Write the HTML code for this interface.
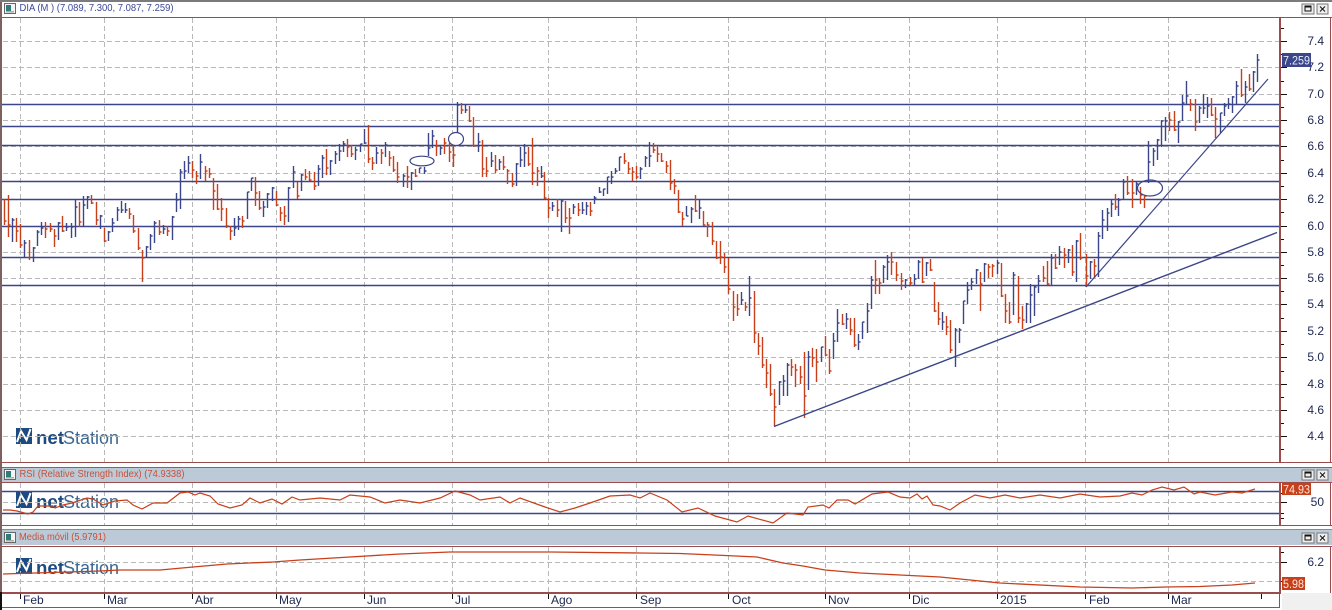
<!DOCTYPE html>
<html><head><meta charset="utf-8"><style>
html,body{margin:0;padding:0;background:#fff;width:1332px;height:610px;overflow:hidden}
svg{display:block;font-family:"Liberation Sans",sans-serif}
</style></head><body>
<svg width="1332" height="610" viewBox="0 0 1332 610" xmlns="http://www.w3.org/2000/svg">
<defs>
<g id="logo">
<rect x="16" y="0" width="16" height="16" fill="#1c4a82"/>
<path d="M17 14 L21 3 L26.5 12 L30.5 1" fill="none" stroke="#fff" stroke-width="2"/>
<text x="36" y="16" font-size="18.5" textLength="28" lengthAdjust="spacingAndGlyphs" font-weight="bold" fill="#1c4a82">net</text>
<text x="63" y="16" font-size="18.5" textLength="56" lengthAdjust="spacingAndGlyphs" fill="#3a6796">Station</text>
</g>
<g id="btns">
<rect x="1302" y="0" width="12" height="10" fill="#eee" stroke="#777" shape-rendering="crispEdges"/>
<rect x="1305" y="2" width="6" height="5" fill="none" stroke="#111" stroke-width="1" shape-rendering="crispEdges"/>
<path d="M1305 2.5h6" stroke="#111" stroke-width="2" shape-rendering="crispEdges"/>
<rect x="1317" y="0" width="11" height="10" fill="#eee" stroke="#777" shape-rendering="crispEdges"/>
<path d="M1320 2.5l5 5M1325 2.5l-5 5" stroke="#111" stroke-width="1"/>
</g>
<g id="ico">
<rect x="4.5" y="0.5" width="11" height="10" fill="#f4f4f4" stroke="#666" shape-rendering="crispEdges"/>
<rect x="6" y="2" width="5" height="6" fill="#2f7d78"/>
<rect x="6" y="8" width="8" height="1.5" fill="#aaa"/>
</g>
</defs>

<!-- window chrome -->
<rect x="0" y="0" width="1332" height="2" fill="#7b7b7b"/>
<use href="#ico" y="3"/>
<text x="19.5" y="11" font-size="10" textLength="154" lengthAdjust="spacingAndGlyphs" fill="#3b4a96">DIA (M ) (7.089, 7.300, 7.087, 7.259)</text>
<use href="#btns" y="4"/>

<rect x="1" y="467" width="1331" height="1.5" fill="#6e6e6e"/>
<rect x="1" y="468" width="1331" height="14" fill="#bccad8"/>
<use href="#ico" y="469"/>
<text x="19.5" y="477" font-size="10" textLength="165" lengthAdjust="spacingAndGlyphs" fill="#c8503a">RSI (Relative Strength Index) (74.9338)</text>
<use href="#btns" y="470"/>

<rect x="1" y="529" width="1331" height="1.5" fill="#8a8a8a"/>
<rect x="1" y="530" width="1331" height="15" fill="#bccad8"/>
<use href="#ico" y="532"/>
<text x="19" y="540" font-size="10" textLength="87" lengthAdjust="spacingAndGlyphs" fill="#c8503a">Media móvil (5.9791)</text>
<use href="#btns" y="533"/>

<rect x="1282" y="593" width="50" height="17" fill="#f0f0f0"/>

<!-- logos -->
<use href="#logo" y="428"/>
<use href="#logo" y="492"/>
<use href="#logo" y="558"/>

<!-- grid -->
<g stroke="#b8b8b8" stroke-width="1" stroke-dasharray="5 3" shape-rendering="crispEdges" fill="none">
<path d="M20.5 18V462M104.5 18V462M192.5 18V462M276.5 18V462M364.5 18V462M452.5 18V462M548.5 18V462M636.5 18V462M728.5 18V462M825.5 18V462M909.5 18V462M997.5 18V462M1085.5 18V462M1168.5 18V462"/>
<path d="M3 41.5H1279M3 67.5H1279M3 94.5H1279M3 120.5H1279M3 146.5H1279M3 173.5H1279M3 199.5H1279M3 226.5H1279M3 252.5H1279M3 278.5H1279M3 304.5H1279M3 331.5H1279M3 357.5H1279M3 384.5H1279M3 410.5H1279M3 436.5H1279"/>
<path d="M20.5 483V525M104.5 483V525M192.5 483V525M276.5 483V525M364.5 483V525M452.5 483V525M548.5 483V525M636.5 483V525M728.5 483V525M825.5 483V525M909.5 483V525M997.5 483V525M1085.5 483V525M1168.5 483V525"/>
<path d="M3 502.5H1279"/>
<path d="M20.5 547V592M104.5 547V592M192.5 547V592M276.5 547V592M364.5 547V592M452.5 547V592M548.5 547V592M636.5 547V592M728.5 547V592M825.5 547V592M909.5 547V592M997.5 547V592M1085.5 547V592M1168.5 547V592"/>
<path d="M3 562.5H1279M3 581.5H1279"/>
</g>

<!-- horizontal levels -->
<g stroke="#3b4589" stroke-width="1.4" fill="none">
<path d="M2 104.5H1279M2 126.5H1279M2 145.5H1279M2 181.5H1279M2 199.5H1279M2 226.5H1279M2 257.5H1279M2 285.5H1279"/>
<path d="M2 491.5H1279M2 513.5H1279"/>
</g>

<!-- bars -->
<g transform="translate(.5 0)" fill="none" stroke-width="1.4">
<path stroke="#c8401a" d="M4 199V225M4 221h2M8 195V237M8 225h2M16 218V242M16 231h2M20 224V248M20 245h2M29 240V260M45 222V238M45 229h2M50 223V232M50 229h2M54 229V247M54 236h2M62 216V232M62 231h2M79 202V227M79 222h2M91 195V204M91 203h2M96 202V225M96 220h2M104 228V242M104 241h2M129 208V219M129 214h2M133 215V233M133 231h2M138 228V250M138 248h2M142 250V282M142 258h2M159 220V235M159 232h2M167 226V236M167 231h2
M192 161V178M192 170h2M196 171V184M196 176h2M205 166V181M205 171h2M209 168V178M209 174h2M213 178V210M213 191h2M217 184V210M217 209h2M221 198V221M221 209h2M226 208V228M226 226h2M230 226V240M230 231h2M242 216V228M242 221h2M255 177V206M255 193h2M259 191V210M259 208h2M276 191V206M276 205h2M280 207V221M280 213h2M284 206V225M284 216h2M297 182V199M297 196h2M305 169V180M305 177h2M309 171V181M309 180h2M314 172V190M314 186h2M326 149V175M326 168h2M347 139V157M347 147h2M351 145V157M351 154h2M368 125V163M368 159h2M372 157V170M372 163h2M381 149V164M381 153h2M389 151V166M389 158h2M393 156V172M393 170h2M397 162V183M397 177h2M407 166V188M407 177h2M415 169V177M415 176h2M436 140V156M436 146h2M444 138V154M444 143h2M449 143V162M449 152h2M453 145V167M453 155h2M461 103V114M461 110h2M469 106V122M469 121h2M473 117V147M473 146h2M482 140V177M482 169h2M486 157V177M486 171h2M495 155V173M495 170h2M503 156V170M503 167h2M507 169V184M507 171h2M512 173V187M512 184h2M528 147V166M528 164h2M532 138V185M532 173h2M537 167V186M537 171h2M544 172V199M544 198h2M548 198V218M548 208h2M557 199V217M557 210h2M565 201V223M565 218h2M569 208V234M569 218h2M578 203V216M578 210h2M590 202V216M590 211h2
M624 153V164M624 161h2M628 162V174M628 169h2M632 167V181M632 172h2M636 166V179M636 177h2M653 143V153M653 150h2M657 146V162M657 154h2M661 153V162M661 161h2M666 161V173M666 166h2M670 160V190M670 183h2M674 179V194M674 186h2M678 190V213M678 212h2M682 212V226M682 219h2M695 195V212M695 211h2M703 211V226M703 225h2M707 222V237M707 225h2M712 222V245M712 241h2M716 241V259M716 258h2M720 241V264M720 257h2M724 253V273M724 267h2M728 258V294M728 289h2M733 291V321M733 307h2M737 294V316M737 309h2M745 302V311M745 307h2M754 291V343M754 333h2M758 333V355M758 346h2M762 337V368M762 365h2M766 359V388M766 373h2M770 364V396M770 394h2M774 389V426M774 407h2M791 359V376M791 367h2M795 364V387M795 370h2M800 366V384M800 377h2M804 352V418M804 396h2M812 348V367M812 358h2M816 349V382M816 362h2M825 336V356M825 355h2M829 349V374M829 371h2M842 314V325M842 324h2M850 318V335M850 330h2M854 318V347M854 345h2M875 260V294M875 280h2M879 278V294M879 283h2M891 252V275M891 262h2M896 262V281M896 275h2M901 273V290M901 281h2M910 277V285M910 283h2M922 258V283M922 282h2M930 259V271M930 270h2M934 282V312M934 311h2M938 302V325M938 319h2M946 316V335M946 327h2M950 320V353M950 350h2M980 272V311M980 284h2M988 264V278M988 267h2M992 264V277M992 266h2M1001 263V297M1001 296h2M1005 294V323M1005 311h2M1009 302V324M1009 322h2M1018 276V323M1018 318h2M1022 306V329M1022 320h2M1043 266V282M1043 278h2M1047 261V285M1047 284h2M1055 254V269M1055 268h2M1064 248V268M1064 255h2M1072 245V276M1072 272h2M1080 233V260M1080 258h2M1086 254V287M1086 276h2M1094 259V278M1094 266h2M1115 194V210M1115 207h2M1127 176V195M1127 193h2M1132 179V208M1132 193h2M1140 187V204M1140 195h2M1144 195V208M1144 196h2M1169 112V131M1169 120h2M1174 111V131M1174 130h2M1190 99V111M1190 104h2M1195 99V131M1195 122h2M1211 98V116M1211 115h2M1215 107V138M1215 119h2M1241 69V97M1241 95h2M1249 74V91M1249 89h2"/>
<path stroke="#3b4589" d="M12 218V242M12 220h2M24 240V257M24 243h2M33 247V262M33 248h2M37 230V246M37 232h2M41 222V235M41 228h2M58 222V240M58 223h2M66 223V231M66 227h2M71 223V238M71 227h2M75 200V237M75 207h2M83 196V226M83 205h2M87 196V209M87 197h2M100 215V229M100 216h2M108 231V241M108 232h2M112 218V232M112 223h2M117 207V221M117 210h2M121 201V213M121 210h2M125 203V213M125 210h2M146 246V258M146 247h2M150 234V250M150 236h2M154 221V243M154 223h2M163 225V234M163 229h2M172 216V240M172 217h2M176 193V212M176 200h2M180 169V209M180 172h2M184 161V179M184 171h2M188 156V173M188 163h2M200 154V179M200 162h2
M234 218V236M234 228h2M238 216V230M238 219h2M247 192V219M247 192h2M251 178V191M251 178h2M263 201V217M263 207h2M267 193V208M267 194h2M272 187V201M272 188h2M288 187V222M288 188h2M293 166V188M293 172h2M301 174V191M301 175h2M318 165V186M318 169h2M322 155V178M322 158h2M330 160V175M330 161h2M335 151V164M335 154h2M339 144V161M339 151h2M343 141V152M343 144h2M355 147V160M355 150h2M360 144V152M360 144h2M364 129V144M364 143h2M376 147V164M376 153h2M385 142V157M385 145h2M403 174V187M403 176h2M411 172V190M411 173h2M419 168V173M419 168h2M424 167V174M424 171h2M428 133V156M428 148h2M432 130V148M432 136h2M440 145V155M440 148h2M457 102V133M457 105h2M465 105V113M465 110h2M478 133V152M478 142h2M491 152V167M491 161h2M499 159V170M499 162h2M516 163V186M516 164h2M520 147V167M520 160h2M524 144V167M524 153h2M541 166V178M541 176h2
M552 202V211M552 206h2M561 200V232M561 201h2M573 204V214M573 207h2M582 202V214M582 210h2M586 202V215M586 206h2M594 196V204M594 198h2M599 187V193M599 192h2M603 189V196M603 189h2M607 177V194M607 177h2M611 171V184M611 177h2M615 168V174M615 171h2M619 157V171M619 157h2M640 167V179M640 169h2M645 156V167M645 158h2M649 142V167M649 156h2M686 206V216M686 216h2M691 207V223M691 209h2M699 200V219M699 208h2M741 292V305M741 300h2M749 276V316M749 298h2M779 381V405M779 382h2M783 375V396M783 381h2M787 363V396M787 365h2M808 351V390M808 357h2M821 347V362M821 347h2M833 333V359M833 341h2M837 309V342M837 323h2M846 313V329M846 319h2M858 334V350M858 342h2M862 322V339M862 322h2M867 303V333M867 311h2M871 276V309M871 280h2M883 265V283M883 267h2M887 255V280M887 262h2M905 279V288M905 280h2M914 274V285M914 279h2M918 260V279M918 262h2M926 262V276M926 263h2M942 312V330M942 322h2M955 328V367M955 330h2M959 328V343M959 330h2M963 301V324M963 301h2M967 282V304M967 290h2M971 278V290M971 282h2M976 269V284M976 270h2M984 263V282M984 264h2M997 260V274M997 263h2M1013 272V315M1013 275h2M1026 303V323M1026 304h2M1030 284V323M1030 295h2M1034 286V316M1034 287h2M1038 275V293M1038 281h2M1051 254V285M1051 258h2M1059 246V265M1059 252h2M1068 249V263M1068 250h2M1076 240V282M1076 241h2M1090 261V279M1090 262h2M1098 232V277M1098 236h2M1102 210V239M1102 220h2M1107 208V231M1107 213h2M1111 199V217M1111 204h2M1118 198V216M1118 200h2M1123 179V199M1123 182h2M1136 182V195M1136 184h2M1148 141V183M1148 162h2M1153 148V166M1153 151h2M1157 139V160M1157 140h2M1161 120V147M1161 121h2M1165 117V141M1165 121h2M1178 121V143M1178 122h2M1182 95V121M1182 103h2M1186 81V104M1186 96h2M1199 106V123M1199 108h2M1203 94V114M1203 108h2M1207 97V118M1207 106h2M1220 113V133M1220 113h2M1224 103V116M1224 106h2M1228 98V109M1228 104h2M1232 96V113M1232 97h2M1236 81V105M1236 86h2M1245 81V103M1245 87h2M1253 71V92M1253 72h2M1257 54V82M1257 60h2"/>
</g>

<!-- trend lines + ellipses -->
<g stroke="#3b4589" fill="none" stroke-width="1.2">
<path d="M774 426.5L1277 232.5" stroke-width="1.4"/>
<path d="M1086 287L1268 79"/>
<ellipse cx="422" cy="161" rx="12" ry="4.8" fill="#fff"/>
<ellipse cx="456" cy="139" rx="7.5" ry="6.5" fill="#fff"/>
<ellipse cx="1150" cy="188" rx="12.5" ry="8"/>
</g>

<!-- RSI line -->
<polyline fill="none" stroke="#c8401a" stroke-width="1.2" points="3,510 10,510 17,511 28,514 33,512 38,506 53,506 55,508 63,505 72,503 87,498 93,499 103,505 115,501 127,500 133,505 142,509 153,503 167,503 180,493 188,492 195,495 200,493 210,496 218,504 230,508 242,505 250,498 260,503 272,499 282,504 292,497 300,500 320,498 340,500 350,495 370,497 385,503 400,500 420,503 440,498 455,491 470,495 480,500 500,497 510,503 520,498 545,507 560,512 575,508 590,503 610,496 630,495 640,498 650,493 667,500 682,512 698,508 715,516 737,522 748,516 773,523 787,513 803,515 808,507 823,505 829,508 837,500 848,500 855,504 872,494 888,492 900,497 910,498 917,494 922,499 927,496 933,505 940,506 950,510 960,503 975,495 990,498 1005,495 1020,498 1040,495 1060,498 1080,494 1100,497 1120,496 1132,493 1142,495 1152,490 1162,487 1174,490 1184,487 1194,494 1200,492 1215,495 1232,492 1242,493 1255,489"/>
<!-- media line -->
<polyline fill="none" stroke="#c8401a" stroke-width="1.3" points="3,574 35,573 100,571 120,570 160,570 193,567 227,564 273,562 300,560 350,557 400,554 450,552 550,552 640,553 680,553.5 728,555.6 757,557 783,563 803,566 825,570 860,573 900,575 940,577 1000,583 1080,587 1132,588 1166,587 1200,586.5 1232,585 1255,583"/>

<!-- frames -->
<g fill="#9c4c4c" shape-rendering="crispEdges">
<rect x="0" y="17" width="1332" height="1"/>
<rect x="1" y="462" width="1331" height="1"/>
<rect x="1279" y="17" width="2" height="446"/>
<rect x="1330" y="17" width="1" height="446"/>
<rect x="1" y="482" width="1331" height="1"/>
<rect x="1" y="525" width="1331" height="1"/>
<rect x="1279" y="482" width="2" height="44"/>
<rect x="1330" y="482" width="1" height="44"/>
<rect x="1" y="546" width="1331" height="1"/>
<rect x="1" y="592" width="1280" height="2"/>
<rect x="1279" y="546" width="2" height="47"/>
<rect x="1330" y="546" width="1" height="47"/>
<rect x="1" y="607" width="1279" height="1"/>
<rect x="1279" y="594" width="1" height="14"/>
</g>
<rect x="0" y="2" width="2" height="590" fill="#7d6060"/>
<rect x="0" y="592" width="2" height="18" fill="#111"/>

<!-- axis ticks -->
<path stroke="#111" stroke-width="1" shape-rendering="crispEdges" fill="none" d="M1281 41.5h6M1281 67.5h6M1281 94.5h6M1281 120.5h6M1281 146.5h6M1281 173.5h6M1281 199.5h6M1281 226.5h6M1281 252.5h6M1281 278.5h6M1281 304.5h6M1281 331.5h6M1281 357.5h6M1281 384.5h6M1281 410.5h6M1281 436.5h6M1281 28.5h3M1281 54.5h3M1281 81.5h3M1281 107.5h3M1281 133.5h3M1281 160.5h3M1281 186.5h3M1281 212.5h3M1281 239.5h3M1281 265.5h3M1281 291.5h3M1281 318.5h3M1281 344.5h3M1281 371.5h3M1281 397.5h3M1281 423.5h3M1281 449.5h3M1281 502.5h6M1281 493.5h3M1281 513.5h3M1281 518.5h3M1281 552.5h3M1281 562.5h6M1281 581.5h6
M20.5 594v5M104.5 594v5M192.5 594v5M276.5 594v5M364.5 594v5M452.5 594v5M548.5 594v5M636.5 594v5M728.5 594v5M825.5 594v5M909.5 594v5M997.5 594v5M1085.5 594v5M1168.5 594v5M1261.5 594v5"/>

<!-- axis labels -->
<g font-size="12" fill="#1d2650" text-anchor="end">
<text x="1324" y="45">7.4</text><text x="1324" y="71">7.2</text><text x="1324" y="98">7.0</text><text x="1324" y="124">6.8</text><text x="1324" y="150">6.6</text><text x="1324" y="177">6.4</text><text x="1324" y="203">6.2</text><text x="1324" y="230">6.0</text><text x="1324" y="256">5.8</text><text x="1324" y="282">5.6</text><text x="1324" y="308">5.4</text><text x="1324" y="335">5.2</text><text x="1324" y="361">5.0</text><text x="1324" y="388">4.8</text><text x="1324" y="414">4.6</text><text x="1324" y="440">4.4</text>
<text x="1324" y="506">50</text><text x="1324" y="566">6.2</text>
</g>
<rect x="1282" y="53" width="29" height="14" fill="#3b4589"/>
<text x="1283" y="64.5" font-size="12" textLength="27" lengthAdjust="spacingAndGlyphs" fill="#e8ecf8">7.259</text>
<rect x="1282" y="483" width="29" height="12" fill="#c8401a"/>
<text x="1283" y="493.5" font-size="12" textLength="27" lengthAdjust="spacingAndGlyphs" fill="#fbe8e0">74.93</text>
<rect x="1282" y="577" width="23" height="13" fill="#c8401a"/>
<text x="1283" y="588" font-size="12" textLength="21" lengthAdjust="spacingAndGlyphs" fill="#fbe8e0">5.98</text>

<g font-size="12" fill="#1d2650">
<text x="23" y="604">Feb</text><text x="107" y="604">Mar</text><text x="195" y="604">Abr</text><text x="279" y="604">May</text><text x="367" y="604">Jun</text><text x="455" y="604">Jul</text><text x="551" y="604">Ago</text><text x="640" y="604">Sep</text><text x="732" y="604">Oct</text><text x="828" y="604">Nov</text><text x="912" y="604">Dic</text><text x="1000" y="604">2015</text><text x="1089" y="604">Feb</text><text x="1171" y="604">Mar</text>
</g>
</svg>
</body></html>
